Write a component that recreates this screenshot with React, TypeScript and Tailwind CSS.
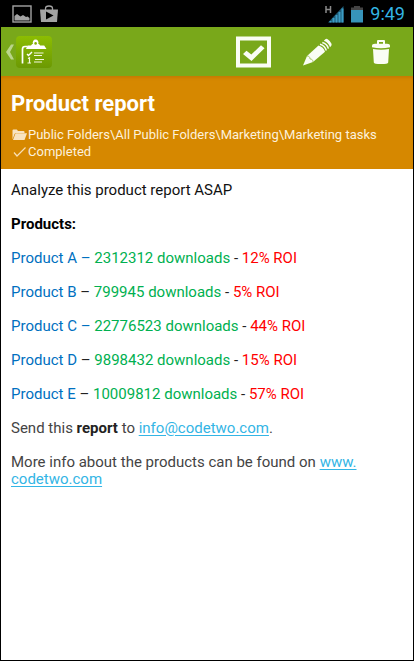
import React from 'react';

const products = [
  { name: 'Product A', dash: 'text-[#0070c0]', downloads: '2312312', roi: '12%' },
  { name: 'Product B', dash: 'text-[#222222]', downloads: '799945', roi: '5%' },
  { name: 'Product C', dash: 'text-[#0070c0]', downloads: '22776523', roi: '44%' },
  { name: 'Product D', dash: 'text-[#222222]', downloads: '9898432', roi: '15%' },
  { name: 'Product E', dash: 'text-[#222222]', downloads: '10009812', roi: '57%' },
];

const StatusBar: React.FC = () => (
  <div className="flex h-[27px] items-center justify-between bg-black pl-[11px] pr-2">
    <div className="flex items-center gap-2">
      <svg className="h-[18px] w-5" viewBox="0 0 20 18" fill="none">
        <rect x="1" y="1" width="18" height="16" stroke="#a3a3a3" strokeWidth="1.4" />
        <path d="M2.5 15.5V11l2.500-2 3.500 2.500 2.500-1.500 3 2 1.500-.5 2 1.500v2.500z" fill="#a3a3a3" />
      </svg>
      <svg className="h-[18px] w-[18px]" viewBox="0 0 18 18">
        <path d="M5.500 5V3.500C5.500 1.800 7 1 9 1s3.500.8 3.500 2.500V5" fill="none" stroke="#a3a3a3" strokeWidth="1.300" />
        <path d="M0 4.500h18l-1 12.500H1z" fill="#a3a3a3" />
        <path d="M6 6.500v8l7.500-4z" fill="#000" />
      </svg>
    </div>
    <div className="flex items-center">
      <svg className="mr-[7px] h-[18px] w-5" viewBox="0 0 20 18">
        <path d="M2 1v7M6.500 1v7M2 4.500h4.500" stroke="#8a8a8a" strokeWidth="1.500" />
        <path d="M4 17.500 19.500 1v16.500z" fill="#1d5a75" />
        <path d="M5.500 16h2v1.500h-2zM8.500 13h2v4.500h-2zM11.500 10h2v7.500h-2zM14.500 7h2v10.500h-2zM17.500 3.500h2v14h-2z" fill="#3c9cc4" />
      </svg>
      <svg className="mr-[7px] h-[18px] w-3" viewBox="0 0 12 18">
        <path d="M3 1h6v1.500h3V5H0V2.500h3z" fill="#444" />
        <path d="M0 5h12v12.500H0z" fill="#3794ba" />
      </svg>
      <span className="pt-px text-[18px] leading-none text-[#33b5e5]">9:49</span>
    </div>
  </div>
);

const ActionBar: React.FC = () => (
  <header className="flex h-[49px] items-center justify-between bg-[#79a81a]">
    <button className="flex items-center pl-1" aria-label="Back">
      <svg className="h-8 w-[11px]" viewBox="0 0 11 32">
        <path d="M6 8.500h3L5 16l4 7.500H6L1 16z" fill="#bad58a" />
      </svg>
      <span className="flex h-8 w-9 rounded-[4px] bg-linear-to-b from-[#8cbd02] to-[#6c9903]">
        <svg className="h-8 w-9" viewBox="0 0 36 32" fill="none">
          <path d="M6.500 27.500V13q0-2.500 2.500-2.500h2" stroke="#fff" strokeWidth="1.700" />
          <path d="M10 13l1.500-3.500H15q1-1.500 2-1.700a2.900 2.900 0 1 1 5.200 0q1 .3 2 1.700h4L30.500 13z" fill="#fff" />
          <circle cx="19.600" cy="7.400" r="1.300" fill="#82b002" />
          <path d="m11 18 1.500 1.500L16 16" stroke="#fff" strokeWidth="1.400" />
          <path d="M18 17h9.500M18 19.500h8M19 23.500h9M18 26h8M12 22.500l1.500-.7V27M11.500 27H15" stroke="#f3f8df" strokeWidth="1.200" />
        </svg>
      </span>
    </button>
    <div className="flex">
      <button className="flex h-[49px] w-16 items-center justify-center" aria-label="Mark as completed">
        <svg className="h-8 w-[35px]" viewBox="0 0 35 32" fill="none">
          <rect x="2" y="2.500" width="31" height="27" stroke="#fafdf5" strokeWidth="4" />
          <path d="M7 18l3.500-3.200 4.800 3.700L25 9.300l3.500 3L15.500 25z" fill="#fafdf5" />
        </svg>
      </button>
      <button className="flex h-[49px] w-16 items-center justify-center" aria-label="Edit">
        <svg className="h-7 w-[30px]" viewBox="0 0 30 28" fill="none">
          <path d="M1 27.500l4-9.500L16.500 7.500q5 1.500 6.500 6.300L11 24z" fill="#fafdf5" />
          <path d="M5 18c2 0 3 1 3 3 2 0 3 1 3 3" stroke="#79a81a" strokeWidth=".6" />
          <path d="M18 6.300q5 1.500 6.300 6.200M20.300 4.500q5 1.500 6.100 6.100" stroke="#fafdf5" strokeWidth="1.500" />
          <path d="M21.800 2.800 23.300 1.200q1-.8 2.400 0 2.800 1.800 3.800 4.600.4 1.200-.4 2.200L28 9.200q-1.500-4.700-6.200-6.400z" fill="#fafdf5" />
        </svg>
      </button>
      <button className="flex h-[49px] w-16 items-center justify-center" aria-label="Delete">
        <svg className="h-[26px] w-5" viewBox="0 0 20 26">
          <path d="M6 5V2q0-1 1-1h6q1 0 1 1v3h-2V3H8v2z" fill="#fafdf5" />
          <path d="M1 8.300V7q0-2.200 3-2.200h12q3 0 3 2.200v1.300q-9 1.800-18 0z" fill="#fafdf5" />
          <path d="M2 10q8 1.600 16 0l-.8 13.500Q17 25 10 25t-7.200-1.500z" fill="#fafdf5" />
        </svg>
      </button>
    </div>
  </header>
);

const TaskHeader: React.FC = () => (
  <section className="bg-[#d68800] px-[10px] pt-3 pb-[9px] text-[#fdf1dc] inset-shadow-[0_2px_3px_#c67a00]">
    <h1 className="text-[22px] leading-8 font-bold text-white">Product report</h1>
    <div className="mt-[6px] text-[13px] leading-[17px]">
      <p className="flex items-center gap-px">
        <svg className="h-3 w-4 shrink-0" viewBox="0 0 16 12" fill="#f8e4c2">
          <path d="M1.500 10.500v-9q0-1 1-1h3.300l1.200 1.500h5.500q1 0 1 1v1H5q-1 0-1.400 1z" />
          <path d="M4.500 4.300H16L13.500 11H2z" />
        </svg>
        Public Folders\All Public Folders\Marketing\Marketing tasks
      </p>
      <p className="flex items-center gap-px">
        <svg className="h-3 w-4 shrink-0" viewBox="0 0 16 12" fill="none">
          <path d="M3 6.500 6 10l8.500-8.500" stroke="#f8dfb5" strokeWidth="1.200" />
        </svg>
        Completed
      </p>
    </div>
  </section>
);

const App: React.FC = () => (
  <div className="flex min-h-screen flex-col border-x border-b border-black bg-white font-['Roboto',sans-serif]">
    <StatusBar />
    <ActionBar />
    <TaskHeader />
    <main className="flex flex-col gap-[17px] px-[10px] pt-[13px] text-[15px] leading-[17px] text-[#444444]">
      <p className="text-[#111111]">Analyze this product report ASAP</p>
      <h2 className="font-bold text-black">Products:</h2>
      {products.map((product) => (
        <p key={product.name}>
          <span className="text-[#0070c0]">{product.name}</span> <span className={product.dash}>–</span>{' '}
          <span className="text-[#00b050]">{product.downloads} downloads</span> <span className="text-[#222222]">-</span>{' '}
          <span className="text-[#ff0000]">{product.roi} ROI</span>
        </p>
      ))}
      <p>
        Send this <b className="text-[#222222]">report</b> to{' '}
        <a className="text-[#33b5e5] underline underline-offset-2" href="mailto:info@codetwo.com">info@codetwo.com</a>.
      </p>
      <p>
        More info about the products can be found on{' '}
        <a className="text-[#33b5e5] underline underline-offset-2" href="#codetwo">www.<wbr />codetwo.com</a>
      </p>
    </main>
  </div>
);

export default App;
